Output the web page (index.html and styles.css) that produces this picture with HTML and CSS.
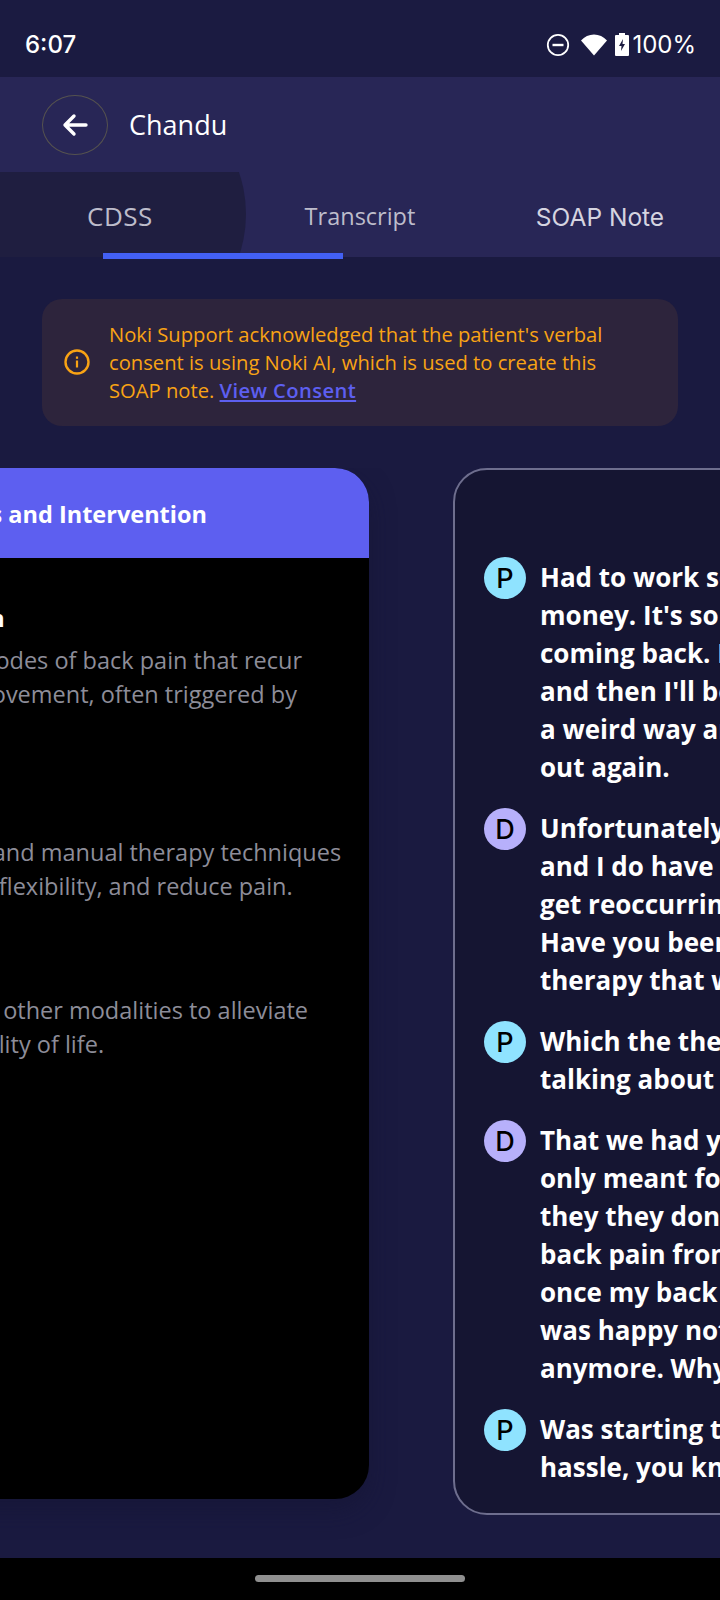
FILE: index.html
```html
<!DOCTYPE html>
<html lang="en">
<head>
    <title>Chandu</title>
    <link rel="stylesheet" href="styles.css">
</head>
<body>
    <div class="statusbar">
        <span class="time">6:07</span>
        <div class="status-icons">
            <svg class="dnd" width="24" height="24" viewBox="0 0 24 24"><circle cx="12" cy="12" r="10.2" fill="none" stroke="#fff" stroke-width="1.8"/><rect x="6.5" y="10.8" width="11" height="2.4" fill="#fff"/></svg>
            <svg class="wifi" width="26" height="22" viewBox="0 0 26 22"><path d="M0 6.5C3.5 2.8 8 .5 13 .5s9.500 2.300 13 6L13 21.500z" fill="#fff"/></svg>
            <svg class="battery" width="14" height="23" viewBox="0 0 14 23"><path d="M4 0h6v2h3a1 1 0 0 1 1 1v19a1 1 0 0 1-1 1H1a1 1 0 0 1-1-1V3a1 1 0 0 1 1-1h3z" fill="#fff"/><path d="M8 6 4 13h2.500L6 18l4-7H7.500z" fill="#1b1b41"/></svg>
            <span class="percent">100%</span>
        </div>
    </div>

    <div class="header">
        <div class="titlebar">
            <button class="back">
                <svg width="26" height="24" viewBox="0 0 26 24"><path d="M24 12H3M12 3l-9 9 9 9" fill="none" stroke="#fff" stroke-width="3.400" stroke-linecap="round" stroke-linejoin="round"/></svg>
            </button>
            <span class="name">Chandu</span>
        </div>
        <div class="tabs">
            <div class="ripple"></div>
            <div class="tab tab-cdss">CDSS</div>
            <div class="tab tab-transcript">Transcript</div>
            <div class="tab tab-soap">SOAP Note</div>
        </div>
        <div class="indicator"></div>
    </div>

    <div class="alert">
        <svg class="alert-icon" width="26" height="26" viewBox="0 0 26 26"><circle cx="13" cy="13" r="11.500" fill="none" stroke="#f9a314" stroke-width="2.400"/><rect x="11.900" y="11.500" width="2.200" height="7" fill="#f9a314"/><rect x="11.900" y="7.500" width="2.200" height="2.300" fill="#f9a314"/></svg>
        <p>Noki Support acknowledged that the patient's verbal<br>consent is using Noki AI, which is used to create this<br>SOAP note. <a href="#">View Consent</a></p>
    </div>

    <div class="carousel">
        <div class="card-plan">
            <div class="plan-head">Goals and Intervention</div>
            <div class="plan-body">
                <h3>Chronic Backpain</h3>
                <p>Spontaneous episodes of back pain that recur<br>while and after movement, often triggered by<br>activities or strain.</p>
                <h3>Physical Care</h3>
                <p>Focused exercise and manual therapy techniques<br>and help improve flexibility, and reduce pain.</p>
                <h3>Pain Relief</h3>
                <p>Heat, ice, rest and other modalities to alleviate<br>pain, improve quality of life.</p>
            </div>
        </div>

        <div class="card-transcript">
            <div class="msg">
                <span class="avatar patient">P</span>
                <p>Had to work so hard to make<br>money. It's so bad and it keeps<br>coming back. I feel okay for now<br>and then I'll bend over in just<br>a weird way and it all goes<br>out again.</p>
            </div>
            <div class="msg">
                <span class="avatar doctor">D</span>
                <p>Unfortunately that is common<br>and I do have a lot of people<br>get reoccurring back pain.<br>Have you been doing the<br>therapy that we talked about?</p>
            </div>
            <div class="msg">
                <span class="avatar patient">P</span>
                <p>Which the the exercises you're<br>talking about now?</p>
            </div>
            <div class="msg">
                <span class="avatar doctor">D</span>
                <p>That we had you do, they were<br>only meant for a short time and<br>they they don't fix all of the<br>back pain from happening, but<br>once my back felt better I<br>was happy not doing them<br>anymore. Why did you stop?</p>
            </div>
            <div class="msg">
                <span class="avatar patient">P</span>
                <p>Was starting to be kind of a<br>hassle, you know how it is.</p>
            </div>
        </div>
    </div>

    <div class="navbar"><div class="pill"></div></div>
</body>
</html>
```

FILE: styles.css
```css
* {
    box-sizing: border-box;
}

body {
    margin: 0;
    width: 720px;
    height: 1600px;
    overflow: hidden;
    display: flex;
    flex-direction: column;
    background-color: #1a1a40;
    color: white;
    font-family: "Open Sans", "Noto Sans", sans-serif;
}

.statusbar {
    height: 77px;
    flex-shrink: 0;
    display: flex;
    align-items: center;
    justify-content: space-between;
    padding: 12px 24px 0 25px;
    background-color: #1b1b41;
}

.time {
    font-family: Inter, sans-serif;
    font-size: 24px;
    font-weight: 500;
}

.status-icons {
    display: flex;
    align-items: center;
}

.dnd {
    margin-right: 11px;
}

.wifi {
    margin-right: 8px;
}

.battery {
    margin-right: 3px;
}

.percent {
    font-family: Inter, sans-serif;
    font-size: 24px;
}

.header {
    position: relative;
    height: 180px;
    flex-shrink: 0;
    background-color: #282656;
}

.titlebar {
    height: 95px;
    display: flex;
    align-items: center;
    padding: 0 0 0 42px;
}

.back {
    width: 66px;
    height: 60px;
    padding: 0;
    display: flex;
    align-items: center;
    justify-content: center;
    background: none;
    border: 1px solid #55524f;
    border-radius: 50%;
}

.name {
    margin-left: 21px;
    font-size: 27px;
    font-weight: 500;
}

.tabs {
    position: relative;
    height: 85px;
    display: flex;
    overflow: hidden;
}

.ripple {
    position: absolute;
    left: -10px;
    top: -86px;
    width: 256px;
    height: 256px;
    border-radius: 50%;
    background-color: #1f1e40;
}

.tab {
    position: relative;
    width: 240px;
    padding-top: 28px;
    text-align: center;
    font-size: 23.500px;
    color: #bdbccb;
}

.tab-cdss {
    font-size: 26px;
    letter-spacing: 0.5px;
    padding-top: 26px;
}

.tab-soap {
    font-family: Inter, sans-serif;
    font-size: 24.500px;
    padding-top: 30px;
    color: #d5d4e0;
}

.indicator {
    position: absolute;
    left: 103px;
    bottom: -2px;
    width: 240px;
    height: 6px;
    background-color: #4360f4;
}

.alert {
    margin: 42px 42px 0;
    height: 127px;
    flex-shrink: 0;
    display: flex;
    align-items: center;
    gap: 19px;
    padding: 0 22px 2px;
    background-color: #2d243c;
    border-radius: 20px;
    color: #f9a314;
}

.alert-icon {
    flex-shrink: 0;
}

.alert p {
    margin: 0;
    font-size: 20.200px;
    line-height: 28px;
}

.alert a {
    color: #5d5ff0;
    font-weight: 600;
    letter-spacing: 0.4px;
}

.carousel {
    margin-top: 42px;
    display: flex;
    align-items: flex-start;
    gap: 84px;
    overflow: hidden;
    flex-shrink: 0;
    padding-bottom: 43px;
}

.card-plan {
    flex-shrink: 0;
    width: 601px;
    height: 1031px;
    margin-left: -232px;
    background-color: black;
    border-radius: 34px;
    overflow: hidden;
    box-shadow: 0 12px 24px rgba(20, 20, 50, 0.5);
}

.plan-head {
    height: 90px;
    display: flex;
    align-items: center;
    justify-content: flex-end;
    padding: 2px 162px 0 0;
    background-color: #5d5ff0;
    font-size: 23.500px;
    font-weight: 700;
}

.plan-body {
    padding: 43px 0 0 32px;
    white-space: nowrap;
}

.plan-body h3 {
    margin: 0;
    font-size: 23.500px;
    line-height: 34px;
    font-weight: 700;
}

.plan-body p {
    margin: 8px 0 48px;
    font-size: 23.500px;
    line-height: 34px;
    color: #8d8d99;
}

.card-transcript {
    flex-shrink: 0;
    width: 600px;
    height: 1047px;
    padding: 87px 0 0 29px;
    background-color: #151532;
    border: 2px solid #6e6e8e;
    border-radius: 34px;
}

.msg {
    display: flex;
    align-items: flex-start;
    gap: 14px;
    margin-bottom: 22px;
}

.msg p {
    margin: 0;
    padding-top: 1px;
    font-size: 26px;
    line-height: 38px;
    font-weight: 700;
    white-space: nowrap;
}

.avatar {
    width: 42px;
    height: 42px;
    flex-shrink: 0;
    display: flex;
    align-items: center;
    justify-content: center;
    border-radius: 50%;
    font-family: Inter, sans-serif;
    font-size: 27px;
    font-weight: 500;
    color: black;
}

.patient {
    background-color: #8fe3ff;
}

.doctor {
    background-color: #b7b0fb;
}

.navbar {
    height: 42px;
    flex-shrink: 0;
    display: flex;
    align-items: flex-start;
    justify-content: center;
    padding-top: 17px;
    background-color: black;
}

.pill {
    width: 210px;
    height: 7px;
    border-radius: 4px;
    background-color: #8f8f8f;
}
```
